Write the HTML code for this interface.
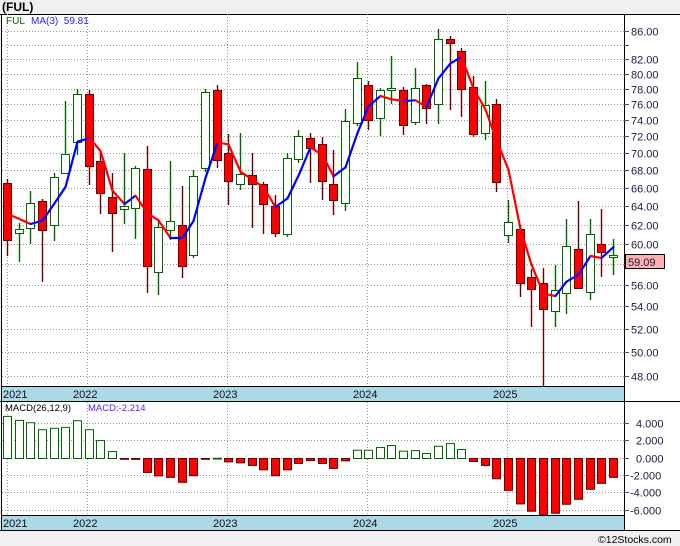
<!DOCTYPE html>
<html><head><meta charset="utf-8"><style>
html,body{margin:0;padding:0;background:#f0f0f0;width:680px;height:546px;overflow:hidden;font-family:"Liberation Sans",sans-serif}
svg{position:absolute;left:0;top:0}
</style></head><body>
<svg id="s" width="680" height="546" xmlns="http://www.w3.org/2000/svg" font-family="Liberation Sans, sans-serif">
<rect x="0" y="0" width="680" height="546" fill="#f0f0f0"/>
<text x="2" y="11" font-size="12" font-weight="bold" fill="#000">(FUL)</text>
<rect x="1" y="14" width="679" height="516" fill="#fff"/>
<line x1="0" y1="14.5" x2="680" y2="14.5" stroke="#000"/>
<line x1="1.5" y1="14" x2="1.5" y2="530" stroke="#000"/>
<line x1="624.5" y1="14" x2="624.5" y2="530" stroke="#000"/>
<g id="grid" stroke="#999" stroke-dasharray="1,2" stroke-width="1"></g>
<g id="c"></g>
<g id="ax" font-size="11" fill="#1a1a40"></g>
<rect x="2" y="387" width="622" height="14" fill="#add8e6"/>
<line x1="2" y1="386.5" x2="624" y2="386.5" stroke="#000"/>
<line x1="0" y1="401.5" x2="680" y2="401.5" stroke="#000"/>
<g font-size="11" fill="#111">
<text x="3" y="398">2021</text><text x="73" y="398">2022</text><text x="213" y="398">2023</text><text x="353" y="398">2024</text><text x="493" y="398">2025</text>
</g>
<rect x="2" y="516" width="622" height="14" fill="#add8e6"/>
<line x1="2" y1="515.5" x2="624" y2="515.5" stroke="#000"/>
<line x1="0" y1="530.5" x2="680" y2="530.5" stroke="#000"/>
<g font-size="11" fill="#111">
<text x="3" y="527">2021</text><text x="73" y="527">2022</text><text x="213" y="527">2023</text><text x="353" y="527">2024</text><text x="493" y="527">2025</text>
</g>
<text x="6" y="24" font-size="10" fill="#006400">FUL</text>
<text x="31" y="24" font-size="10" fill="#2222ff">MA(3)&#160; 59.81</text>
<text x="5" y="411" font-size="9.5" fill="#000">MACD(26,12,9)</text>
<text x="88" y="411" font-size="9.5" fill="#5522ff">MACD:-2.214</text>
<rect x="625.5" y="254.5" width="39" height="14" fill="#ffb0b0" stroke="#000"/>
<text x="628" y="266" font-size="11" fill="#1a1a40">59.09</text>
<text x="598" y="543" font-size="10.5" fill="#000">©12Stocks.com</text>
</svg>
<script>
var NS="http://www.w3.org/2000/svg";
function el(p,t,a){var e=document.createElementNS(NS,t);for(var k in a)e.setAttribute(k,a[k]);p.appendChild(e);return e;}
var grid=document.getElementById('grid'),c=document.getElementById('c'),ax=document.getElementById('ax');
function Y(p){return 31+(Math.log(86)-Math.log(p))*591.8;}
for(var p=48;p<=86;p+=2){var y=Math.round(Y(p))+0.5;el(grid,'line',{x1:2,y1:y,x2:624,y2:y});el(ax,'line',{x1:624,y1:y,x2:629,y2:y,stroke:'#555'});
 if(p!=84&&p!=58){var t=el(ax,'text',{x:631,y:y+4});t.textContent=p.toFixed(2);}}
[7,87,227,367,507].forEach(function(x){el(grid,'line',{x1:x+.5,y1:14,x2:x+.5,y2:386});el(grid,'line',{x1:x+.5,y1:402,x2:x+.5,y2:515});});
var mv=[[4,423],[2,440],[0,458],[-2,475],[-4,492],[-6,510]];
mv.forEach(function(m){var y=m[1]+0.5;el(grid,'line',{x1:2,y1:y,x2:624,y2:y});el(ax,'line',{x1:624,y1:y,x2:629,y2:y,stroke:'#555'});var t=el(ax,'text',{x:m[0]<0?630:636,y:y+4});t.textContent=(m[0]<0?'-':'')+Math.abs(m[0]).toFixed(3);});
var C=[['r',183,240,179,256],['g',229,233,223,262],['g',203,228,191,244],['r',201,230,199,282],['g',177,225,173,241],['g',154,173,101,173],['g',94,142,89,155],['r',94,166,90,185],['r',161,193,150,214],['r',197,213,173,252],['g',206,209,153,224],['g',168,208,166,239],['r',169,266,146,293],['g',227,272,220,295],['g',221,230,161,240],['r',225,266,186,278],['g',176,255,170,258],['g',92,168,89,172],['r',90,160,85,168],['r',153,181,134,205],['g',174,184,133,190],['r',175,184,153,228],['r',184,204,182,234],['r',206,233,195,237],['g',158,234,153,237],['g',136,159,130,163],['r',138,148,133,183],['r',144,181,137,200],['r',184,200,150,215],['g',121,203,109,211],['g',78,123,62,126],['r',85,120,81,130],['g',90,118,88,136],['g',88,90,56,104],['r',90,125,87,135],['g',88,122,68,125],['r',85,108,84,124],['g',39,104,29,124],['r',39,43,36,110],['r',51,89,48,117],['r',87,134,76,137],['g',105,133,81,140],['r',104,182,99,192],['g',222,235,200,243],['r',229,283,225,297],['r',277,289,269,327],['r',283,309,268,386],['g',290,311,265,327],['g',246,293,219,314],['r',249,288,201,289],['g',234,292,219,300],['r',244,252,209,277],['g',255,257,239,275]];
var cl=[];
C.forEach(function(d,i){var x=Math.round(7+i*11.65);var red=d[0]=='r';
 el(c,'line',{x1:x+.5,y1:d[3],x2:x+.5,y2:d[4],stroke:red?'#660000':'#006400','stroke-width':1.4});
 el(c,'rect',{x:x-3.5,y:d[1]+.5,width:8,height:Math.max(1,d[2]-d[1]),fill:red?'#ff0000':'#fff',stroke:red?'#660000':'#006400','stroke-width':1});
 cl.push(red?d[2]:d[1]);});
var ma=[];for(var i=0;i<cl.length;i++){if(i<2){ma.push(null);continue;}ma.push((cl[i]+cl[i-1]+cl[i-2])/3);}
ma[0]=214;ma[1]=219;
for(var i=1;i<cl.length;i++){var x0=Math.round(7+(i-1)*11.65)+.5,x1=Math.round(7+i*11.65)+.5;
 el(c,'line',{x1:x0,y1:ma[i-1],x2:x1,y2:ma[i],stroke:ma[i]>ma[i-1]?'#ff0000':'#0000ff','stroke-width':2.2,'stroke-linecap':'round'});}
var M=[4.84,4.38,4.11,3.31,3.47,3.58,4.34,3.31,2.06,0.8,-0.05,-0.1,-1.6,-2.0,-2.17,-2.74,-1.98,-0.03,0.03,-0.38,-0.5,-0.8,-1.3,-1.98,-1.3,-0.57,-0.23,-0.57,-1.14,-0.27,0.95,0.95,1.26,1.49,0.84,0.91,0.57,1.41,1.71,1.03,-0.34,-0.8,-2.32,-3.66,-5.22,-6.06,-6.6,-6.29,-5.26,-4.69,-3.54,-2.86,-2.17];
M.forEach(function(v,i){var x=Math.round(7+i*11.65);var z=458.5,h=v*8.7;var top=v>0?z-h:z,hh=Math.abs(h);if(top+hh>515)hh=515-top;
 el(c,'rect',{x:x-3.5,y:top,width:8,height:Math.max(hh,0.8),fill:v<0?'#ff0000':'#fff',stroke:v<0?'#660000':'#006400','stroke-width':1});});
</script>
</body></html>
